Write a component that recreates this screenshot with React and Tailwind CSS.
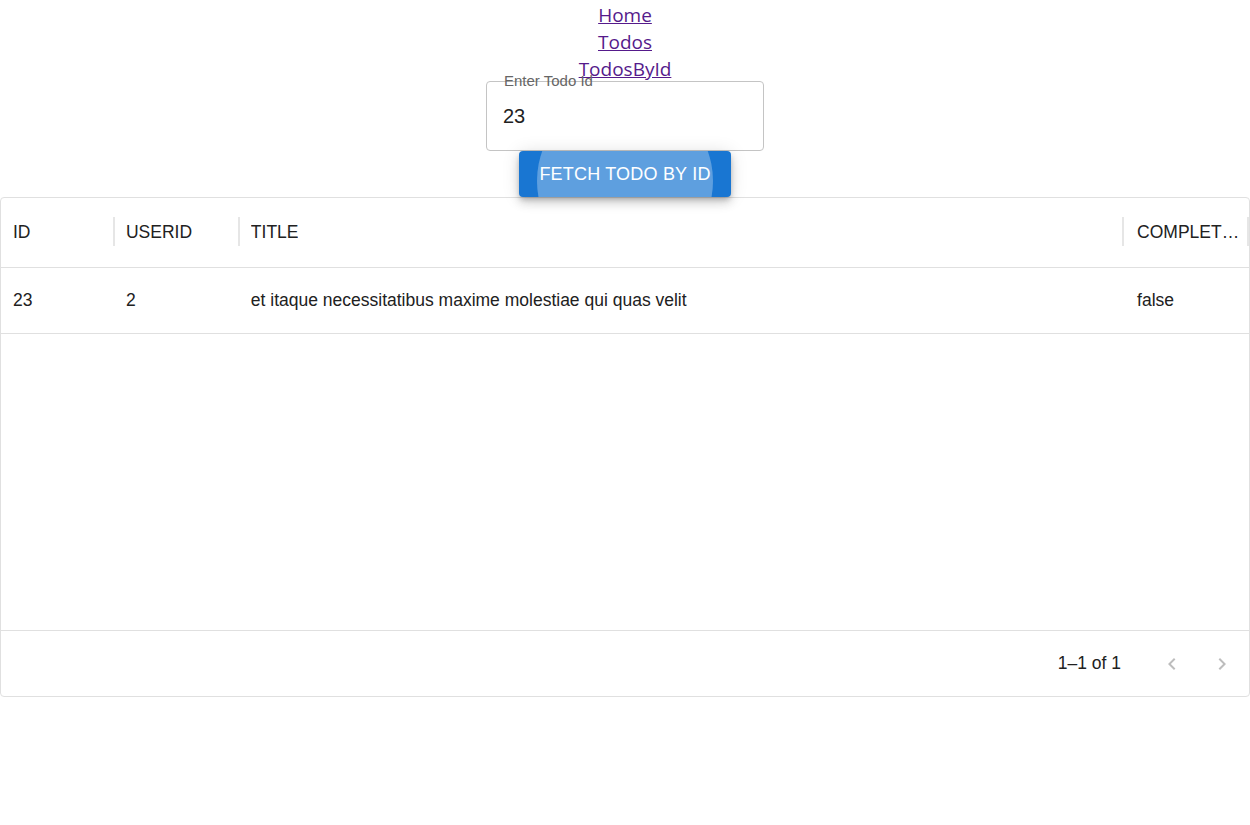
import React from 'react';

const columns = [
  { key: 'id', label: 'ID', width: 'w-[114px]', pad: 'pl-[12px]' },
  { key: 'userId', label: 'USERID', width: 'w-[125px]', pad: 'pl-[11px]' },
  { key: 'title', label: 'TITLE', width: 'w-[885px]', pad: 'pl-[11px]' },
  { key: 'completed', label: 'COMPLET…', width: 'w-[125px]', pad: 'pl-[13px]' },
];

const rows = [{ id: 23, userId: 2, title: 'et itaque necessitatibus maxime molestiae qui quas velit', completed: 'false' }];

const Chevron = ({ dir }) => (
  <svg width="24" height="24" viewBox="0 0 24 24" className="fill-[#bdbdbd]">
    {dir === 'left' ? (
      <path d="M15.41 7.41 14 6l-6 6 6 6 1.41-1.41L10.83 12z" />
    ) : (
      <path d="M10 6 8.59 7.41 13.17 12l-4.58 4.59L10 18l6-6z" />
    )}
  </svg>
);

export default function App() {
  return (
    <div className="w-[1250px] h-[825px] bg-white font-['Liberation_Sans',Arial,sans-serif] text-[#212121]">
      {/* Nav links */}
      <nav className="flex flex-col items-center pt-[2px] font-['Open_Sans',sans-serif] text-[19px] leading-[27px]">
        <a href="#" className="text-[#551a8b] underline">Home</a>
        <a href="#" className="text-[#551a8b] underline">Todos</a>
        <a href="#" className="text-[#551a8b] underline">TodosById</a>
      </nav>

      {/* Input + button */}
      <div className="flex flex-col items-center -mt-[2px]">
        <div className="relative w-[278px] h-[70px] border border-[#c4c4c4] rounded-[4px]">
          <span className="absolute -top-[10px] left-[11px] px-[6px] text-[15px] leading-[17px] text-[#666]">
            Enter Todo Id
          </span>
          <div className="px-4 pt-[22px] text-[20px] leading-6 text-[#212121]">23</div>
        </div>
        <button className="relative overflow-hidden w-[212px] h-[46px] rounded-[4px] bg-[#1976d2] text-white text-[18px] tracking-[0.2px] shadow-[0_3px_5px_-1px_rgba(0,0,0,0.2),0_6px_10px_0_rgba(0,0,0,0.14),0_1px_18px_0_rgba(0,0,0,0.12)]">
          <span className="absolute left-[18px] top-[-58px] w-[176px] h-[176px] rounded-full bg-white/30" />
          <span className="relative">FETCH TODO BY ID</span>
        </button>
      </div>

      {/* Data grid */}
      <div className="w-[1250px] h-[500px] border border-[#e0e0e0] rounded-[4px] flex flex-col text-[17.5px]">
        <div className="flex h-[70px] border-b border-[#e0e0e0] items-center">
          {columns.map((c) => (
            <div key={c.key} className={`${c.width} ${c.pad} relative flex items-center h-full pr-[8px]`}>
              <span className="whitespace-nowrap overflow-hidden">{c.label}</span>
              <span className="absolute right-0 top-[19px] h-[29px] w-[2px] bg-[#e6e6e6]" />
            </div>
          ))}
        </div>
        {rows.map((r) => (
          <div key={r.id} className="flex h-[66px] items-center border-b border-[#e0e0e0]">
            {columns.map((c) => (
              <div key={c.key} className={`${c.width} ${c.pad} pr-3 truncate`}>{String(r[c.key])}</div>
            ))}
          </div>
        ))}
        <div className="flex-1" />
        <div className="h-[66px] border-t border-[#e0e0e0] flex items-center justify-end pr-[15px]">
          <span className="mr-[39px]">1–1 of 1</span>
          <div className="flex items-center gap-[26px]">
            <Chevron dir="left" />
            <Chevron dir="right" />
          </div>
        </div>
      </div>
    </div>
  );
}
